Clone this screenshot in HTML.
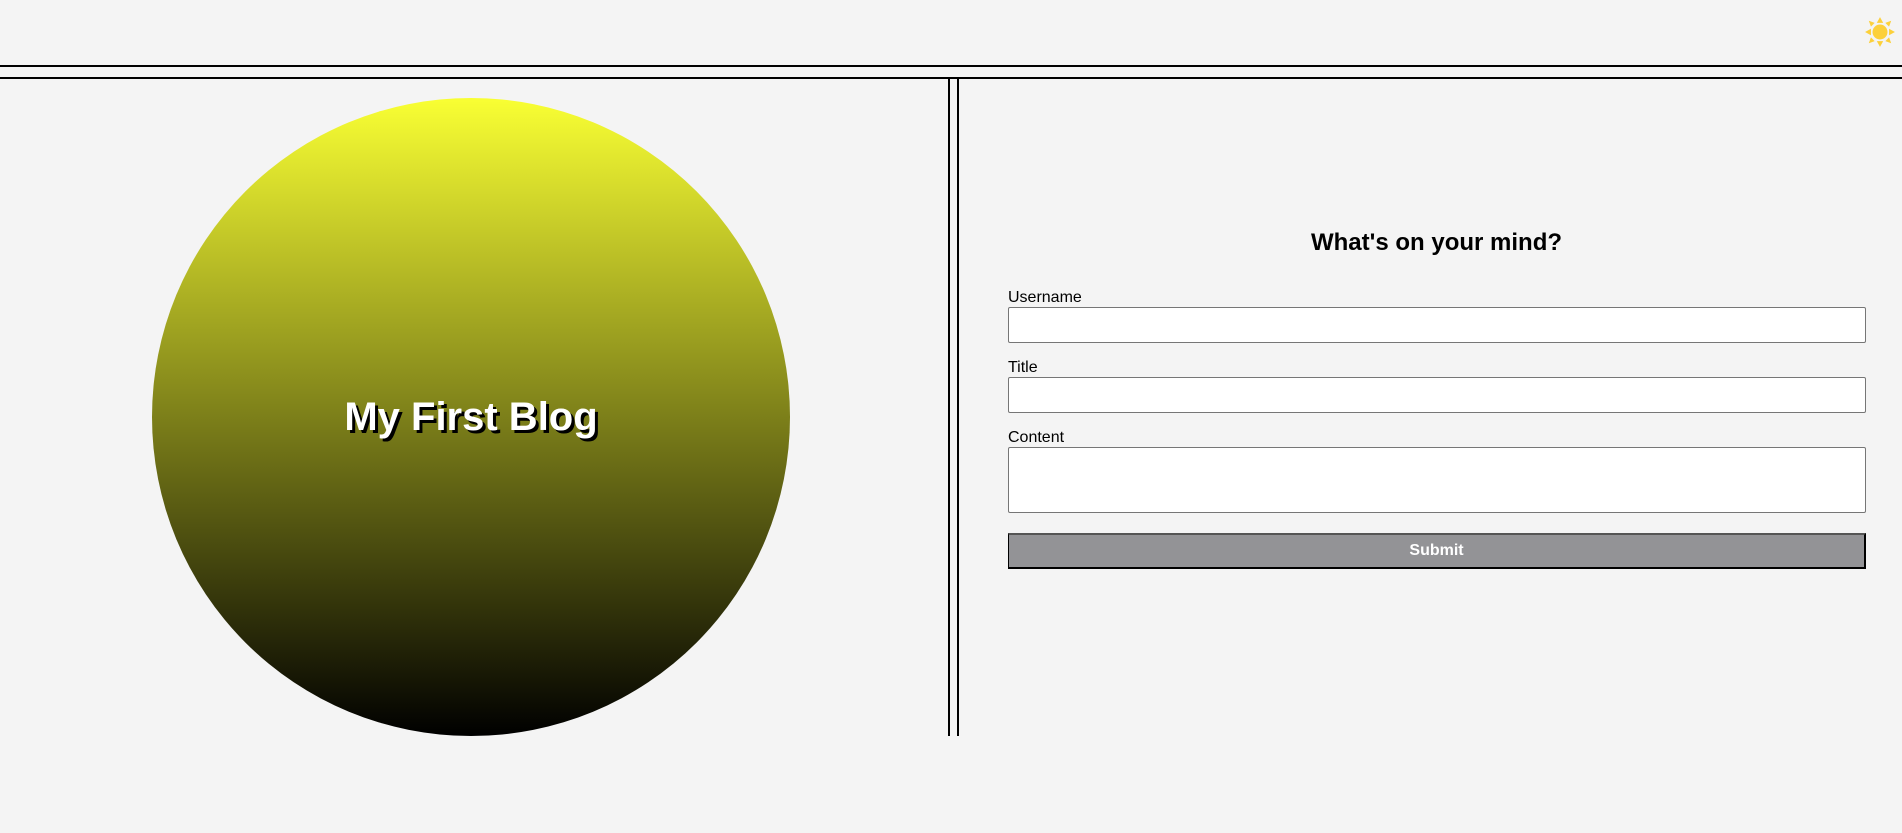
<!DOCTYPE html>
<html><head><meta charset="utf-8"><style>
body{margin:0;width:1902px;height:833px;background:#f4f4f4;font-family:"Liberation Sans",Arial,sans-serif;position:relative;overflow:hidden}
.abs{position:absolute}
.h{left:0;width:1902px;height:2px;background:#000}
.v{top:78px;height:658px;width:2px;background:#000}
.circle{left:152px;top:98px;width:638px;height:638px;border-radius:50%;background:linear-gradient(#f9ff33,#000);display:flex;align-items:center;justify-content:center}
.circle span{color:#fff;font-weight:bold;font-size:40px;text-shadow:3px 3px 0 #000}
.lbl{left:1008px;font-size:16px;color:#000}
.inp{left:1008px;width:856px;background:#fff;border:1px solid #767676;border-radius:2px}
.btn{left:1008px;top:533px;width:858px;height:36px;background:#939396;border:1px solid #000;border-bottom:2px solid #000;border-right:2px solid #000;border-top:2px solid #555;color:#fff;font-weight:bold;font-size:16px;text-align:center;line-height:32px;box-sizing:border-box}
</style></head><body>
<svg class="abs" style="left:1864px;top:16px" width="32" height="32" viewBox="0 0 30 30">
<circle cx="15" cy="15" r="7" fill="#fcd03a"/>
<g fill="#fcd03a">
<polygon points="15,1 18,6.5 12,6.5"/><polygon points="15,29 18,23.5 12,23.5"/>
<polygon points="1,15 6.5,12 6.5,18"/><polygon points="29,15 23.5,12 23.5,18"/>
<polygon points="4.5,4.5 10,6.5 6.5,10"/><polygon points="25.5,4.5 20,6.5 23.5,10"/>
<polygon points="4.5,25.5 10,23.5 6.5,20"/><polygon points="25.5,25.5 20,23.5 23.5,20"/>
</g></svg>
<div class="abs h" style="top:65px"></div>
<div class="abs h" style="top:77px"></div>
<div class="abs v" style="left:948px"></div>
<div class="abs v" style="left:957px"></div>
<div class="abs circle"><span>My First Blog</span></div>
<div class="abs" style="left:1008px;width:857px;top:229px;text-align:center;font-size:24px;font-weight:bold">What's on your mind?</div>
<div class="abs lbl" style="top:289px">Username</div>
<div class="abs inp" style="top:307px;height:34px"></div>
<div class="abs lbl" style="top:359px">Title</div>
<div class="abs inp" style="top:377px;height:34px"></div>
<div class="abs lbl" style="top:429px">Content</div>
<div class="abs inp" style="top:447px;height:64px"></div>
<div class="abs btn">Submit</div>
</body></html>
